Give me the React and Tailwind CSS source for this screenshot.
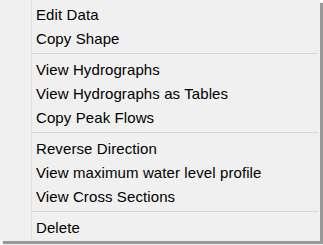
import React from 'react';

const groups = [
    ['Edit Data', 'Copy Shape'],
    ['View Hydrographs', 'View Hydrographs as Tables', 'Copy Peak Flows'],
    ['Reverse Direction', 'View maximum water level profile', 'View Cross Sections'],
    ['Delete'],
];

const MenuItem = ({ label }) => (
    <div className="h-[24px] flex items-center pl-[36px] text-[15px] text-black leading-none tracking-[0.1px]">
        {label}
    </div>
);

const Separator = () => (
    <div className="h-[7px] flex items-center pl-[32px] pr-[2px]">
        <div className="h-px w-full bg-[#d7d7d7]" />
    </div>
);

export default function App() {
    return (
        <div className="w-[323px] h-[245px] bg-white overflow-hidden" style={{ fontFamily: '"Liberation Sans", Arial, sans-serif' }}>
            <div className="relative w-[320px] h-[241px] bg-[#f0f0f0] shadow-[3px_3px_1px_rgba(0,0,0,0.4)] pt-[2px]">
                {/* gutter line */}
                <div className="absolute left-[31px] top-0 bottom-0 w-px bg-[#e0e0e0]" />
                {groups.map((items, gi) => (
                    <React.Fragment key={gi}>
                        {gi > 0 && <Separator />}
                        {items.map((label) => (
                            <MenuItem key={label} label={label} />
                        ))}
                    </React.Fragment>
                ))}
            </div>
        </div>
    );
}
